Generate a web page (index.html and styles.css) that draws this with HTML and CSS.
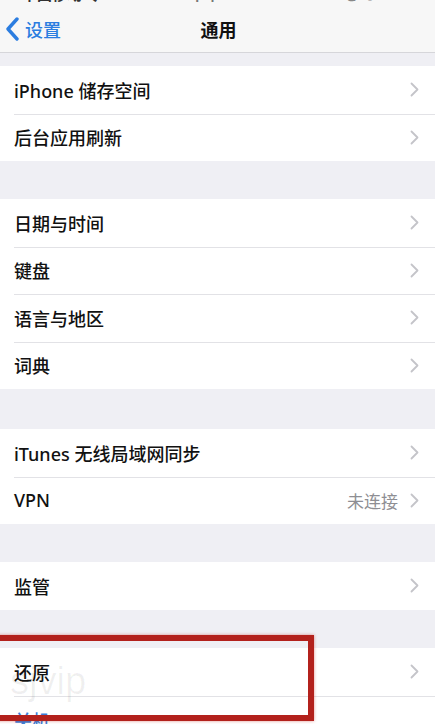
FILE: index.html
```html
<!DOCTYPE html>
<html lang="zh-CN">
<head>
  <meta charset="UTF-8" />
  <meta name="viewport" content="width=device-width, initial-scale=1" />
  <title>通用</title>
  <link rel="stylesheet" href="styles.css">
</head>
<body>
  <div class="navbar">
    <div class="status">
      <span class="status-left">中国移动 令</span>
      <span class="status-mid">下午3:05</span>
      <span class="status-right">@ ⊕ 86% ▬</span>
    </div>
    <div class="nav-row">
      <a class="back">
        <svg width="15" height="24" viewBox="0 0 15 24"><polyline points="12,2 3,12 12,22" fill="none" stroke="#2b7de0" stroke-width="3.4" stroke-linecap="round" stroke-linejoin="round"/></svg>
        <span>设置</span>
      </a>
      <div class="title">通用</div>
    </div>
  </div>

  <div class="group first">
    <div class="row"><span class="label">iPhone 储存空间</span><span class="chev"></span></div>
    <div class="row"><span class="label">后台应用刷新</span><span class="chev"></span></div>
  </div>

  <div class="group g2">
    <div class="row"><span class="label">日期与时间</span><span class="chev"></span></div>
    <div class="row"><span class="label">键盘</span><span class="chev"></span></div>
    <div class="row"><span class="label">语言与地区</span><span class="chev"></span></div>
    <div class="row"><span class="label">词典</span><span class="chev"></span></div>
  </div>

  <div class="group g3">
    <div class="row"><span class="label">iTunes 无线局域网同步</span><span class="chev"></span></div>
    <div class="row"><span class="label">VPN</span><span class="value">未连接</span><span class="chev"></span></div>
  </div>

  <div class="group g4">
    <div class="row"><span class="label">监管</span><span class="chev"></span></div>
  </div>

  <div class="group g5">
    <div class="row"><span class="label">还原</span><span class="chev"></span></div>
    <div class="row"><span class="label action">关机</span></div>
  </div>

  <div class="watermark">sjvip</div>
  <div class="highlight"></div>

  <script>
    document.querySelectorAll('.chev').forEach(function (el) {
      el.innerHTML = '<svg width="9" height="15" viewBox="0 0 9 15"><polyline points="1.5,1.5 7.5,7.5 1.5,13.5" fill="none" stroke="#c4c4c9" stroke-width="1.8" stroke-linecap="round" stroke-linejoin="round"/></svg>';
    });
  </script>
</body>
</html>
```

FILE: styles.css
```css
body {
  margin: 0;
  background-color: #efeff4;
  font-family: "Noto Sans", "Noto Sans CJK SC", sans-serif;
  color: #111;
  height: 724px;
  overflow: hidden;
  position: relative;
}
.navbar {
  background-color: #f7f7f7;
  border-bottom: 1px solid #d6d6da;
  height: 52px;
  overflow: hidden;
}
.status {
  height: 5px;
  overflow: hidden;
  position: relative;
  font-size: 15px;
  font-weight: 700;
  color: #333;
}
.status span {
  position: absolute;
  top: -15px;
  line-height: 18px;
}
.status-left { left: 22px; }
.status-mid { left: 190px; color: #777; }
.status-right { right: 4px; color: #888; }
.nav-row {
  height: 47px;
  display: flex;
  align-items: center;
  justify-content: center;
  position: relative;
}
.back {
  position: absolute;
  left: 5px;
  top: 0;
  height: 47px;
  display: flex;
  align-items: center;
  gap: 5px;
  color: #2b7de0;
  font-size: 18px;
  font-weight: 500;
}
.title {
  font-size: 18px;
  font-weight: 700;
  margin-left: 2px;
}
.group {
  background-color: #fff;
}
.group.first { margin-top: 13px; }
.group.g2 { margin-top: 38px; }
.group.g3 { margin-top: 40px; }
.group.g4 { margin-top: 38px; }
.group.g5 { margin-top: 38.5px; }
.row {
  height: 47.5px;
  display: flex;
  align-items: center;
  padding: 0 16px 0 14px;
  position: relative;
}
.row + .row::before {
  content: "";
  position: absolute;
  left: 14px;
  right: 0;
  top: 0;
  border-top: 1px solid #e2e2e6;
}
.label {
  flex: 1;
  font-size: 18px;
  font-weight: 500;
}
.label.action {
  color: #3b7fd9;
  margin-top: 2px;
}
.value {
  font-size: 17px;
  color: #8e8e93;
  margin-right: 12px;
}
.chev {
  display: flex;
  align-items: center;
}
.watermark {
  position: absolute;
  left: 10px;
  top: 660px;
  font-size: 38px;
  font-family: "Liberation Sans", sans-serif;
  color: rgba(0, 0, 0, 0.06);
}
.highlight {
  position: absolute;
  left: -12px;
  top: 635px;
  width: 314px;
  height: 74px;
  border: 6px solid #b3211c;
  box-shadow: 0 0 3px rgba(200, 40, 30, 0.5);
}
```
